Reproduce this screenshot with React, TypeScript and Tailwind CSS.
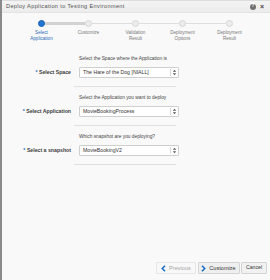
import React from 'react';

const steps = [
  ['Select', 'Application'],
  ['Customize'],
  ['Validation', 'Result'],
  ['Deployment', 'Options'],
  ['Deployment', 'Result'],
];

const rows = [
  { hint: 'Select the Space where the Application is', label: 'Select Space', value: 'The Hare of the Dog [NIALL]' },
  { hint: 'Select the Application you want to deploy', label: 'Select Application', value: 'MovieBookingProcess' },
  { hint: 'Which snapshot are you deploying?', label: 'Select a snapshot', value: 'MovieBookingV2' },
];

function Chevron({ dir }: { dir: 'left' | 'right' }) {
  return (
    <svg width="5" height="7" viewBox="0 0 5 7" className="shrink-0">
      <polyline
        points={dir === 'left' ? '4,0.8 1.3,3.5 4,6.2' : '1,0.8 3.7,3.5 1,6.2'}
        fill="none"
        stroke="#1f6fc5"
        strokeWidth="1.6"
      />
    </svg>
  );
}

function Select({ value }: { value: string }) {
  return (
    <div className="flex h-[11px] w-[100px] items-center rounded-[1px] border border-[#cfcfcf] bg-white">
      <span className="flex-1 pl-[3px] text-[5.2px] leading-none text-[#333]">{value}</span>
      <div className="h-[7px] w-px bg-[#d9d9d9]" />
      <svg width="7" height="7" viewBox="0 0 7 7">
        <polygon points="3.5,0.8 5.2,2.8 1.8,2.8" fill="#555" />
        <polygon points="3.5,6.2 5.2,4.2 1.8,4.2" fill="#555" />
      </svg>
    </div>
  );
}

export default function App() {
  return (
    <div
      className="flex h-[280px] w-[270px] flex-col border-l-2 border-[#8a8a8a] bg-[#f9f9f9]"
      style={{ fontFamily: '"Liberation Sans", Arial, sans-serif' }}
    >
      {/* Header */}
      <div className="flex h-[13px] items-center border-b border-[#e3e3e3] border-t border-t-[#dcdcdc] bg-gradient-to-b from-[#f4f4f4] to-[#ececec] pl-[4px] pr-[6px]">
        <span className="flex-1 text-[5.6px] tracking-[0.35px] text-[#505050]">
          Deploy Application to Testing Environment
        </span>
        <span className="flex h-[6px] w-[6px] items-center justify-center rounded-full bg-[#707070] text-[4.5px] font-bold leading-none text-white">
          ?
        </span>
        <span className="ml-[4px] text-[7px] font-bold leading-none text-[#444]">×</span>
      </div>

      {/* Train */}
      <div className="pt-[7px]">
        <div className="ml-[36px] flex items-center">
          {steps.map((s, i) => (
            <React.Fragment key={i}>
              {i > 0 && (
                <div
                  className={
                    i === 1
                      ? 'h-[3px] w-[40px] bg-[#d2d2d2]'
                      : 'h-px w-[40px] bg-[#dedede]'
                  }
                />
              )}
              <div
                className={
                  i === 0
                    ? 'h-[7px] w-[7px] rounded-full border border-[#1a5fb0] bg-[#1f74d4]'
                    : 'h-[7px] w-[7px] rounded-full border border-[#d6d6d6] bg-[#ececec]'
                }
              />
            </React.Fragment>
          ))}
        </div>
        <div className="ml-[16px] mt-[3px] grid w-[235px] grid-cols-5 text-center text-[4.6px] leading-[6px]">
          {steps.map((s, i) => (
            <div key={i} className={i === 0 ? 'text-[#2a6bb8]' : 'text-[#7a7a7a]'}>
              {s.map((l) => (
                <div key={l}>{l}</div>
              ))}
            </div>
          ))}
        </div>
      </div>

      {/* Form */}
      <div className="mt-[14px] flex flex-col gap-[8px]">
        {rows.map((r) => (
          <div key={r.label}>
            <div className="grid grid-cols-[69px_100px] gap-x-[8px] gap-y-[5px]">
              <div />
              <div className="h-[6px] text-[4.8px] leading-[6px] text-[#444]">{r.hint}</div>
              <div className="flex items-center justify-end text-[5.2px] font-bold leading-none text-[#3a3a3a]">
                <span className="mr-[1.5px] text-[#2a6bb8]">*</span>
                {r.label}
              </div>
              <Select value={r.value} />
            </div>
            <div className="ml-[72px] mt-[8px] h-px w-[102px] bg-[#e0e0e0]" />
          </div>
        ))}
      </div>

      {/* Footer */}
      <div className="mt-auto mb-[6px] flex justify-end gap-[1.5px] pr-[3px]">
        <button className="flex h-[12px] w-[40px] items-center justify-center gap-[3px] rounded-[1px] border border-[#e6e6e6] bg-[#f8f8f8] text-[5.6px] text-[#a3a3a3]">
          <Chevron dir="left" />
          Previous
        </button>
        <button className="flex h-[12px] w-[42px] items-center justify-center gap-[3px] rounded-[1px] border border-[#d4d4d4] bg-[#efefef] text-[5.6px] text-[#333]">
          <Chevron dir="right" />
          Customize
        </button>
        <button className="flex h-[12px] w-[26px] items-center justify-center rounded-[1px] border border-[#d4d4d4] bg-[#f1f1f1] text-[5.2px] text-[#333]">
          Cancel
        </button>
      </div>
    </div>
  );
}
